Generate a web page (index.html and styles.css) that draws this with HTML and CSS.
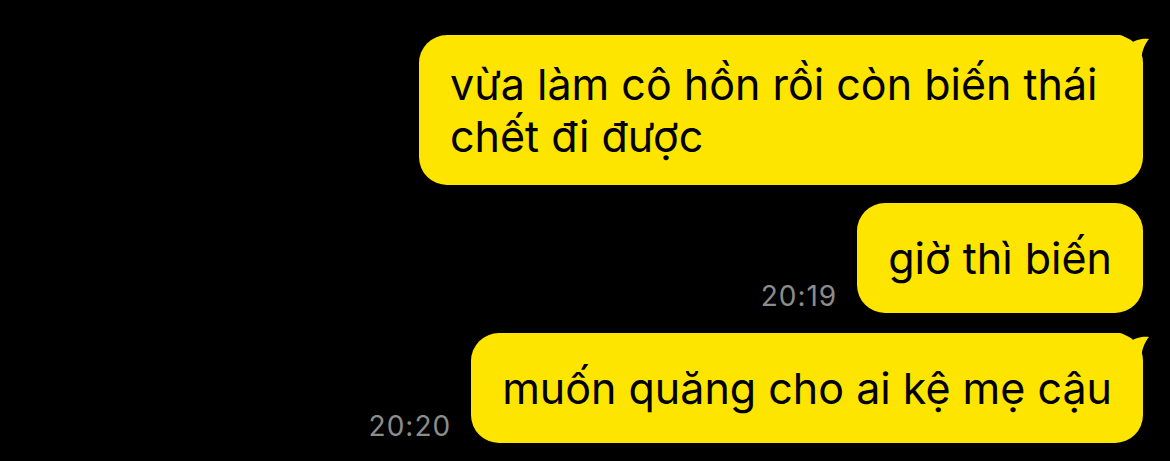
FILE: index.html
```html
<!DOCTYPE html>
<html lang="vi">
<head>
  <meta charset="UTF-8">
  <meta name="viewport" content="width=device-width, initial-scale=1.0">
  <title>Chat</title>
  <link rel="stylesheet" href="styles.css">
</head>
<body>
  <div class="chat">
    <!-- first message of a group gets the tail -->
    <div class="row">
      <div class="bubble tail">
        vừa làm cô hồn rồi còn biến thái chết đi được
        <svg class="tail-mark" viewBox="0 0 40 40" width="40" height="40">
          <path d="M0,0 H8 C13,0 16,4 17,10 C22,6 30,3 38,4 C33,10 30,18 30,30 V40 H0 Z" />
        </svg>
      </div>
    </div>
    <div class="row">
      <span class="time">20:19</span>
      <div class="bubble">giờ thì biến</div>
    </div>
    <div class="row">
      <span class="time">20:20</span>
      <div class="bubble tail">
        muốn quăng cho ai kệ mẹ cậu
        <svg class="tail-mark" viewBox="0 0 40 40" width="40" height="40">
          <path d="M0,0 H8 C13,0 16,4 17,10 C22,6 30,3 38,4 C33,10 30,18 30,30 V40 H0 Z" />
        </svg>
      </div>
    </div>
  </div>
</body>
</html>
```

FILE: styles.css
```css
body {
  margin: 0;
  background: #000;
  font-family: Inter, "Noto Sans", sans-serif;
  height: 461px;
  overflow: hidden;
}

.chat {
  display: flex;
  flex-direction: column;
  align-items: flex-end;
  gap: 18px;
  padding: 35px 27px 0 0;
}

.row {
  display: flex;
  align-items: flex-end;
  gap: 20px;
}

.row:last-child {
  margin-top: 2px;
}

.time {
  color: #8c8c8c;
  font-size: 28px;
  line-height: 30px;
  letter-spacing: 1px;
  margin-bottom: 2px;
}

.bubble {
  position: relative;
  box-sizing: border-box;
  max-width: 724px;
  min-height: 110px;
  display: flex;
  align-items: center;
  padding: 23px 31px;
  background: #fee500;
  color: #000;
  border-radius: 28px;
  font-size: 43px;
  line-height: 52px;
}

.tail-mark {
  position: absolute;
  top: 0;
  right: -8px;
  fill: #fee500;
}
```
